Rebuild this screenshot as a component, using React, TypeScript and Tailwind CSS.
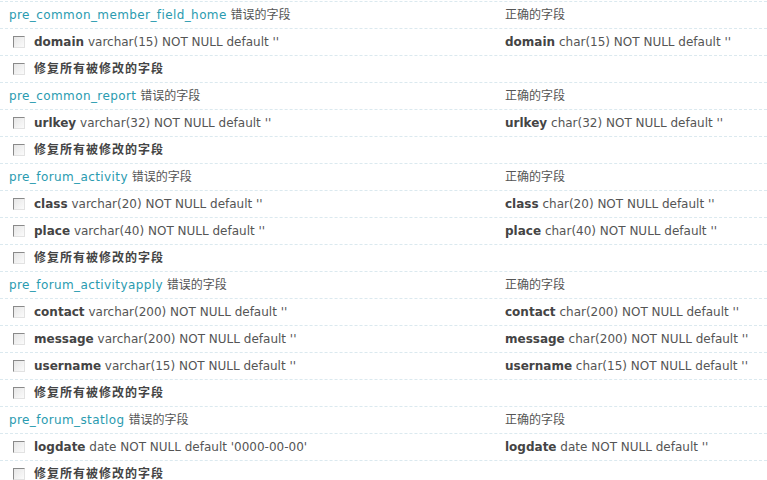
const tables = [
  {
    name: 'pre_common_member_field_home',
    fields: [{ name: 'domain', wrong: "varchar(15) NOT NULL default ''", right: "char(15) NOT NULL default ''" }],
  },
  {
    name: 'pre_common_report',
    fields: [{ name: 'urlkey', wrong: "varchar(32) NOT NULL default ''", right: "char(32) NOT NULL default ''" }],
  },
  {
    name: 'pre_forum_activity',
    fields: [
      { name: 'class', wrong: "varchar(20) NOT NULL default ''", right: "char(20) NOT NULL default ''" },
      { name: 'place', wrong: "varchar(40) NOT NULL default ''", right: "char(40) NOT NULL default ''" },
    ],
  },
  {
    name: 'pre_forum_activityapply',
    fields: [
      { name: 'contact', wrong: "varchar(200) NOT NULL default ''", right: "char(200) NOT NULL default ''" },
      { name: 'message', wrong: "varchar(200) NOT NULL default ''", right: "char(200) NOT NULL default ''" },
      { name: 'username', wrong: "varchar(15) NOT NULL default ''", right: "char(15) NOT NULL default ''" },
    ],
  },
  {
    name: 'pre_forum_statlog',
    fields: [{ name: 'logdate', wrong: "date NOT NULL default '0000-00-00'", right: "date NOT NULL default ''" }],
  },
]

function Checkbox() {
  return (
    <span className="inline-block w-[12px] h-[12px] shrink-0 border border-t-[#8a8a8a] border-l-[#8a8a8a] border-r-[#e2e2e2] border-b-[#e2e2e2] bg-gradient-to-br from-[#e6e6e6] to-[#fbfbfb]" />
  )
}

function Row({ left, right }: { left: React.ReactNode; right?: React.ReactNode }) {
  return (
    <div className="grid grid-cols-[496px_1fr] h-[27px] items-center border-t border-dashed border-[#dbe9ef]">
      <div className="pl-[9px] flex items-center">{left}</div>
      <div className="pl-[9px] flex items-center">{right}</div>
    </div>
  )
}

export default function App() {
  return (
    <div
      className="w-[767px] h-[480px] overflow-hidden bg-white pt-[1px] text-[12px] leading-[18px] text-[#555]"
      style={{ fontFamily: '"DejaVu Sans", Verdana, "Noto Sans CJK SC", sans-serif' }}
    >
      {tables.map((t) => (
        <div key={t.name}>
          <Row
            left={
              <span>
                <span className="text-[#2a9bb0] tracking-[0.4px]">{t.name}</span> 错误的字段
              </span>
            }
            right={<span>正确的字段</span>}
          />
          {t.fields.map((f) => (
            <Row
              key={f.name}
              left={
                <span className="flex items-center pl-[4px] gap-[9px]">
                  <Checkbox />
                  <span>
                    <b className="font-bold text-[#444]">{f.name}</b> {f.wrong}
                  </span>
                </span>
              }
              right={
                <span>
                  <b className="font-bold text-[#444]">{f.name}</b> {f.right}
                </span>
              }
            />
          ))}
          <Row
            left={
              <span className="flex items-center pl-[4px] gap-[9px]">
                <Checkbox />
                <b className="font-bold text-[#444] tracking-[1px]">修复所有被修改的字段</b>
              </span>
            }
          />
        </div>
      ))}
    </div>
  )
}
